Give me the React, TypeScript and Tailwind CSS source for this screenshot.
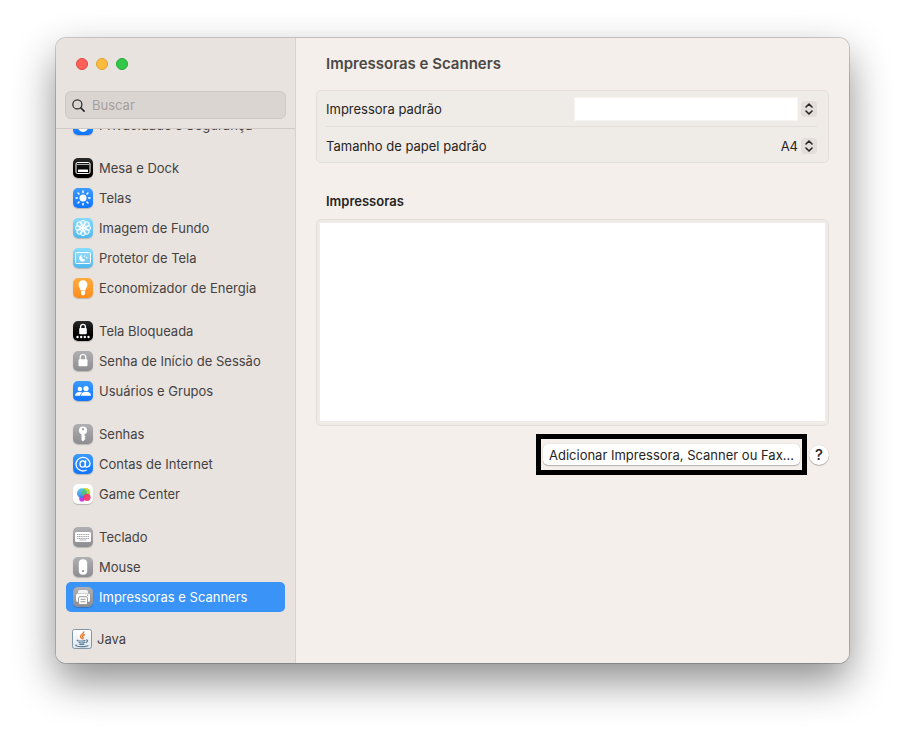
import type { ReactNode } from "react";
import clsx from "clsx";

type SidebarItem = {
  label: string;
  tile: string;
  icon: ReactNode;
};

const blue = "bg-linear-to-b from-[#3b9bff] to-[#0f74ff]";
const gray = "bg-linear-to-b from-[#b0b0b4] to-[#8c8c91]";
const sky = "bg-linear-to-b from-[#86dcfb] to-[#50b7ee]";
const black = "bg-linear-to-b from-[#2b2b2b] to-[#000000]";

const angles = [0, 45, 90, 135, 180, 225, 270, 315];

const groups: SidebarItem[][] = [
  [
    {
      label: "Privacidade e Segurança",
      tile: blue,
      icon: <path d="M5 12V7.500h2V5h2V3.500h2V5h2v2h2v5a5 5 0 0 1-10 0z" fill="#fff" />,
    },
  ],
  [
    {
      label: "Mesa e Dock",
      tile: black,
      icon: (
        <>
          <rect x="3" y="4.5" width="14" height="11" rx="1.5" fill="none" stroke="#fff" />
          <path d="M3.5 6.5h13" stroke="#aaa" />
          <rect x="5" y="11.5" width="10" height="2.5" rx=".5" fill="#fff" />
        </>
      ),
    },
    {
      label: "Telas",
      tile: blue,
      icon: (
        <>
          <circle cx="10" cy="10" r="3.5" fill="#fff" />
          {angles.map((a) => (
            <path key={a} d="M10 3v1.4" stroke="#fff" strokeWidth="1.5" strokeLinecap="round" transform={`rotate(${a} 10 10)`} />
          ))}
        </>
      ),
    },
    {
      label: "Imagem de Fundo",
      tile: sky,
      icon: (
        <>
          {angles.map((a) => (
            <g key={a} transform={`rotate(${a} 10 10)`}>
              <circle cx="10" cy="4.8" r="2.4" fill="#fff" fillOpacity=".2" stroke="#fff" />
              <circle cx="10" cy="7.9" r="1" fill="none" stroke="#fff" strokeWidth=".9" />
            </g>
          ))}
          <circle cx="10" cy="10" r="1.6" fill="#fff" />
        </>
      ),
    },
    {
      label: "Protetor de Tela",
      tile: sky,
      icon: (
        <>
          <rect x="2.5" y="4.5" width="15" height="11" rx="1" fill="#fff" fillOpacity=".15" stroke="#fff" />
          <path d="M8.800 7a3.300 3.300 0 1 0 3.600 4.500A3.300 3.300 0 0 1 8.800 7z" fill="#fff" />
          <circle cx="11.4" cy="8.3" r=".7" fill="#fff" />
          <circle cx="13.6" cy="9.8" r=".8" fill="#fff" />
        </>
      ),
    },
    {
      label: "Economizador de Energia",
      tile: "bg-linear-to-b from-[#ffab3f] to-[#ff8c1a]",
      icon: (
        <path
          d="M10 2.300A4.400 4.400 0 0 0 5.600 6.700c0 2 1.600 3.400 2.100 5.900h4.600c.5-2.500 2.100-3.900 2.100-5.900A4.400 4.400 0 0 0 10 2.300zM8 13h4v2.600c0 1-.9 1.800-2 1.800s-2-.8-2-1.800z"
          fill="#fff"
        />
      ),
    },
  ],
  [
    {
      label: "Tela Bloqueada",
      tile: black,
      icon: (
        <>
          <path d="M7.600 7.500V5.800a2.400 2.400 0 0 1 4.800 0v1.700" fill="none" stroke="#fff" strokeWidth="1.4" />
          <rect x="6.200" y="7" width="7.6" height="6.2" rx="1" fill="#fff" />
          {[4.5, 8.2, 11.8, 15.5].map((x) => (
            <circle key={x} cx={x} cy="16" r="1.2" fill="#fff" />
          ))}
        </>
      ),
    },
    {
      label: "Senha de Início de Sessão",
      tile: gray,
      icon: (
        <>
          <path d="M7.200 9V6.300a2.800 2.800 0 0 1 5.600 0V9" fill="none" stroke="#fff" strokeWidth="1.2" />
          <rect x="5.5" y="8.3" width="9" height="7" rx="1" fill="#fff" />
        </>
      ),
    },
    {
      label: "Usuários e Grupos",
      tile: blue,
      icon: (
        <g fill="#fff">
          <circle cx="6.8" cy="8" r="2.2" />
          <path d="M2 14.800c0-2.500 2-3.900 4.600-3.900 1 0 1.900.2 2.600.6-1.200.8-1.900 1.900-2 3.300z" />
          <circle cx="13" cy="7.5" r="2.6" />
          <path d="M8 14.800c0-2.600 2-4 5-4s5 1.400 5 4z" />
        </g>
      ),
    },
  ],
  [
    {
      label: "Senhas",
      tile: gray,
      icon: (
        <>
          <circle cx="10" cy="6.6" r="4" fill="#fff" />
          <path d="M8.500 9.500h2.900v2l1.300 1-1.300 1.200 1.200 1.100-1.200 1.300L10 17.500l-1.500-1.400z" fill="#fff" />
          <circle cx="10" cy="5.2" r="1.1" fill="#9c9ca0" />
        </>
      ),
    },
    {
      label: "Contas de Internet",
      tile: blue,
      icon: (
        <g fill="none" stroke="#fff" strokeWidth="1.3" strokeLinecap="round">
          <ellipse cx="9.7" cy="10" rx="2.700" ry="3.200" />
          <path d="M12.700 6.800l-.5 4.700c-.1 2.500 4.800 2 4.800-2A7 6.800 0 1 0 10 17c1.200 0 2.300-.2 3.200-.7" />
        </g>
      ),
    },
    {
      label: "Game Center",
      tile: "bg-white",
      icon: (
        <>
          <defs>
            <linearGradient id="gc-green" x1="0" y1="0" x2="1" y2="1">
              <stop offset="0" stopColor="#ffd21f" />
              <stop offset="1" stopColor="#8edb3b" />
            </linearGradient>
            <linearGradient id="gc-blue" x1="0" y1="0" x2="0" y2="1">
              <stop offset="0" stopColor="#4fc3e8" />
              <stop offset="1" stopColor="#3379ea" />
            </linearGradient>
          </defs>
          <circle cx="12.8" cy="8.3" r="4.4" fill="url(#gc-green)" />
          <circle cx="9" cy="14.8" r="2.8" fill="#c53bea" />
          <circle cx="9" cy="9.3" r="5" fill="url(#gc-blue)" opacity=".92" />
          <path d="M11 4.700a5 5 0 0 1 2.400 7 4.400 4.400 0 0 1-4.500-1.500A4.500 4.500 0 0 1 11 4.700z" fill="#51c96b" opacity=".75" />
          <circle cx="14" cy="13.3" r="3.6" fill="#fa3565" opacity=".92" />
        </>
      ),
    },
  ],
  [
    {
      label: "Teclado",
      tile: gray,
      icon: (
        <>
          <rect x="2" y="5" width="16" height="10" rx="1.5" fill="#fff" />
          <path d="M4 7.500h12M4 9.500h12M4 11.500h12" stroke="#a5a5a9" strokeDasharray="1.3 .5" />
          <path d="M6.500 13h7" stroke="#a5a5a9" strokeWidth=".8" />
        </>
      ),
    },
    {
      label: "Mouse",
      tile: gray,
      icon: (
        <>
          <rect x="5.8" y="2.2" width="8.400" height="15.600" rx="4" fill="#fff" />
          <circle cx="10" cy="14" r="1.1" fill="#8c8c91" />
        </>
      ),
    },
    {
      label: "Impressoras e Scanners",
      tile: gray,
      icon: (
        <>
          <path d="M5 6V5c0-1.200.8-2 2-2h6c1.200 0 2 .8 2 2v1z" fill="#fff" opacity=".85" />
          <rect x="3" y="6.5" width="14" height="8.5" rx="2" fill="#fff" />
          <rect x="5.5" y="9.700" width="9" height="7.800" rx="1.500" fill="#fff" stroke="#98989c" />
          <path d="M7.500 12.300h5M7.500 14.800h5" stroke="#98989c" />
          <circle cx="14.7" cy="8.2" r=".7" fill="#98989c" />
        </>
      ),
    },
  ],
];

const selectedLabel = "Impressoras e Scanners";

function JavaIcon() {
  return (
    <svg className="size-5" viewBox="0 0 20 20" fill="none" aria-hidden="true">
      <defs>
        <linearGradient id="java-tile" x1="0" y1="0" x2="0" y2="1">
          <stop offset="0" stopColor="#ffffff" />
          <stop offset="1" stopColor="#dde5ec" />
        </linearGradient>
      </defs>
      <rect x=".5" y=".5" width="19" height="19" rx="2" fill="url(#java-tile)" stroke="#8097aa" />
      <path
        d="M11.500 2.500c1.300 2-3.600 3.300-2.900 5.300.3.900 1.300 1.400 1.100 2.200M12.800 5.500c-2.300.9-2.600 1.800-1.800 2.700.5.700.2 1.300-.6 1.900"
        stroke="#ef7a2c"
        strokeWidth="1.4"
      />
      <path
        d="M6 11c-1.500.5-1 1 3.500 1 2 0 3-.2 4-.6M6.700 13.300c1.500.7 4.800.6 6.300 0M7.200 15c1.500.6 3.800.5 5.300 0M14.200 11c2-.3 1.900 1.900-.6 2.700M4.500 15.800c-2 .9.500 1.800 5 1.800s6.500-.5 6.500-1.400"
        stroke="#5c7f9c"
        strokeWidth="1.2"
      />
    </svg>
  );
}

function SidebarLink({ item }: { item: SidebarItem }) {
  const selected = item.label === selectedLabel;
  return (
    <a
      href="#"
      aria-current={selected ? "page" : undefined}
      className={clsx(
        "flex h-[30px] items-center gap-1.5 rounded-[5px] pl-[7px] whitespace-nowrap",
        selected ? "bg-[#3a93f7] text-white" : "text-[#46423f]",
      )}
    >
      <span className={clsx("size-5 shrink-0 overflow-hidden rounded-[5px] shadow-[0_1px_1px_rgba(0,0,0,0.2)]", item.tile)}>
        <svg className="size-5" viewBox="0 0 20 20" aria-hidden="true">
          {item.icon}
        </svg>
      </span>
      {item.label}
    </a>
  );
}

function Sidebar() {
  return (
    <aside className="flex w-60 shrink-0 flex-col border-r border-[#d8d3cf] bg-[#e8e3df]">
      <div className="border-b border-[#cfcac6] px-[9px] pt-5 pb-[9px]">
        <div className="flex gap-2 pl-[11px]">
          <button aria-label="Fechar" className="size-3 rounded-full border border-[#e2463f] bg-[#fe5f57]" />
          <button aria-label="Minimizar" className="size-3 rounded-full border border-[#e0a033] bg-[#febb3e]" />
          <button aria-label="Ampliar" className="size-3 rounded-full border border-[#24a934] bg-[#32c748]" />
        </div>
        <label className="mt-[21px] flex h-7 items-center gap-[7px] rounded-md border border-[#cdc8c4] bg-[#dad5d1] pl-1.5">
          <svg className="size-[13px] shrink-0" viewBox="0 0 14 14" fill="none" stroke="#2a2725" aria-hidden="true">
            <circle cx="5.8" cy="5.8" r="4.9" strokeWidth="1.3" />
            <path d="M9.400 9.400l3.600 3.600" strokeWidth="1.8" strokeLinecap="round" />
          </svg>
          <input
            type="search"
            placeholder="Buscar"
            aria-label="Buscar"
            className="w-full min-w-0 bg-transparent outline-none placeholder:text-[#a5a09d]"
          />
        </label>
      </div>

      {/* the list is scrolled, its first row sits half under the search bar */}
      <nav className="flex-1 overflow-hidden px-[10px]">
        <div className="-mt-[19px] flex flex-col gap-[13px] pb-2">
          {groups.map((items) => (
            <ul key={items[0].label}>
              {items.map((item) => (
                <li key={item.label}>
                  <SidebarLink item={item} />
                </li>
              ))}
            </ul>
          ))}
          <a href="#" className="flex h-7 items-center gap-[5px] pl-1.5 text-[#46423f]">
            <JavaIcon />
            Java
          </a>
        </div>
      </nav>
    </aside>
  );
}

function Stepper() {
  return (
    <span className="pointer-events-none absolute right-0 flex size-4 items-center justify-center rounded-[4px] bg-[#e3deda]">
      <svg
        className="size-4"
        viewBox="0 0 16 16"
        fill="none"
        stroke="#262422"
        strokeWidth="1.6"
        strokeLinecap="round"
        strokeLinejoin="round"
        aria-hidden="true"
      >
        <path d="M5 6l3-3 3 3M5 10l3 3 3-3" />
      </svg>
    </span>
  );
}

export default function App() {
  return (
    <div className="flex min-h-screen bg-white px-14 pt-[38px] pb-[74px] font-['Inter','Liberation_Sans',sans-serif] text-[13px] leading-4">
      <div className="flex flex-1 overflow-hidden rounded-[10px] shadow-[0_0_0_1px_rgba(0,0,0,0.18),0_18px_42px_rgba(0,0,0,0.45)]">
        <Sidebar />

        <main className="min-w-0 flex-1 bg-[#f4efeb] px-5 pt-4 text-[#262422]">
          <h1 className="pl-[10px] text-[15px] leading-5 font-semibold text-[#4c4846]">Impressoras e Scanners</h1>

          <section className="mt-4 rounded-[5px] border border-[#e3deda] bg-[#efebe7] pr-[11px] pl-[9px]">
            <div className="flex h-9 items-center justify-between border-b border-[#e3deda]">
              <label htmlFor="default-printer">Impressora padrão</label>
              <div className="relative flex w-[243px] items-center pr-[19px]">
                <select id="default-printer" className="h-6 w-full appearance-none border border-[#f7f5f3] bg-white">
                  <option value="" />
                </select>
                <Stepper />
              </div>
            </div>
            <div className="flex h-[35px] items-center justify-between pt-0.5">
              <label htmlFor="paper-size">Tamanho de papel padrão</label>
              <div className="relative flex items-center">
                <select id="paper-size" className="appearance-none bg-transparent pr-[19px] text-right">
                  <option>A4</option>
                </select>
                <Stepper />
              </div>
            </div>
          </section>

          <h2 className="mt-[30px] pl-[10px] font-semibold">Impressoras</h2>
          <div className="mt-[10px] rounded-[5px] border border-[#e3deda] bg-[#efebe7] px-[3px] pt-[3px] pb-1">
            <div className="h-[198px] bg-white" />
          </div>

          <div className="mt-2 flex items-center justify-end gap-0.5">
            <div className="border-5 border-black px-0.5 py-[5px]">
              <button className="flex h-[21px] items-center rounded-[5px] bg-white px-1.5 whitespace-nowrap shadow-[0_1px_1px_rgba(0,0,0,0.25),0_0_1px_rgba(0,0,0,0.2)]">
                Adicionar Impressora, Scanner ou Fax...
              </button>
            </div>
            <button
              aria-label="Ajuda"
              className="flex size-5 items-center justify-center rounded-full bg-white text-[15px] font-medium shadow-[0_1px_1px_rgba(0,0,0,0.25),0_0_1px_rgba(0,0,0,0.2)]"
            >
              ?
            </button>
          </div>
        </main>
      </div>
    </div>
  );
}
